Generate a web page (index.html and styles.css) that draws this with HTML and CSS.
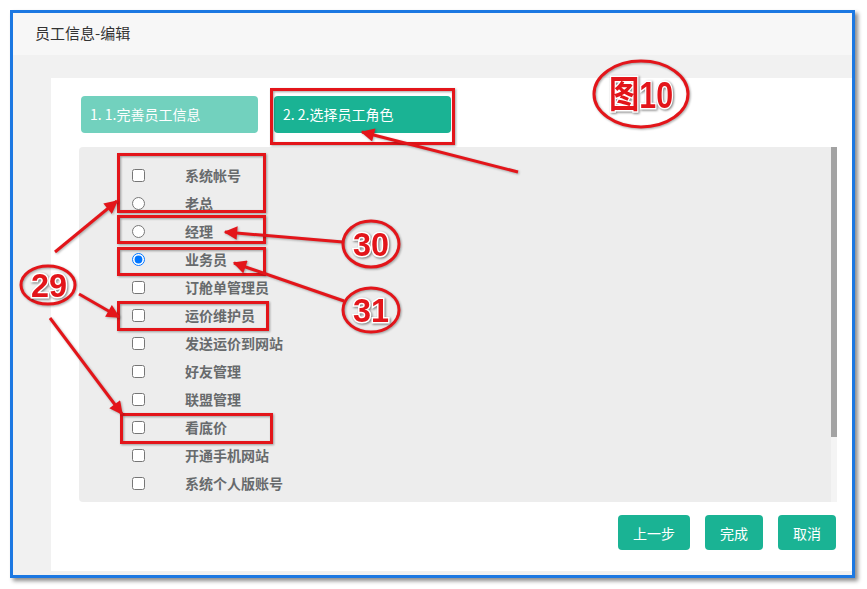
FILE: index.html
```html
<!DOCTYPE html>
<html lang="zh-CN">
<head>
  <meta charset="UTF-8">
  <title>员工信息-编辑</title>
  <link rel="stylesheet" href="styles.css">
</head>
<body>
  <div class="ventana">
    <div class="cabecera">员工信息-编辑</div>
    <div class="fondo">
      <div class="panel">
        <div class="pasos">
          <div class="paso hecho">1. 1.完善员工信息</div>
          <div class="paso actual">2. 2.选择员工角色</div>
        </div>

        <div class="lista">
          <ul class="roles">
            <li><input type="checkbox"><span>系统帐号</span></li>
            <li><input type="radio" name="rol"><span>老总</span></li>
            <li><input type="radio" name="rol"><span>经理</span></li>
            <li><input type="radio" name="rol" checked><span>业务员</span></li>
            <li><input type="checkbox"><span>订舱单管理员</span></li>
            <li><input type="checkbox"><span>运价维护员</span></li>
            <li><input type="checkbox"><span>发送运价到网站</span></li>
            <li><input type="checkbox"><span>好友管理</span></li>
            <li><input type="checkbox"><span>联盟管理</span></li>
            <li><input type="checkbox"><span>看底价</span></li>
            <li><input type="checkbox"><span>开通手机网站</span></li>
            <li><input type="checkbox"><span>系统个人版账号</span></li>
          </ul>
          <div class="barra"><div class="pulgar"></div></div>
        </div>

        <div class="acciones">
          <button type="button">上一步</button>
          <button type="button">完成</button>
          <button type="button">取消</button>
        </div>
      </div>
    </div>
  </div>

  <!-- anotaciones en rojo encima de la captura -->
  <svg class="notas" width="867" height="589" viewBox="0 0 867 589">
    <defs>
      <marker id="punta" viewBox="0 0 10 10" refX="9" refY="5" markerWidth="5" markerHeight="4.5" orient="auto" markerUnits="strokeWidth">
        <path d="M0 0 L10 5 L0 10 Z" fill="#e3151a"/>
      </marker>
    </defs>
    <g class="marcos">
      <rect x="271.5" y="89.5" width="182" height="54"/>
      <rect x="118.5" y="154.5" width="146" height="57"/>
      <rect x="118.5" y="216.5" width="146" height="26"/>
      <rect x="118.5" y="248.5" width="146" height="26"/>
      <rect x="118.5" y="302.5" width="149" height="27"/>
      <rect x="121.5" y="414.5" width="150" height="28"/>
    </g>
    <g class="flechas">
      <line x1="518" y1="172" x2="362" y2="132"/>
      <line x1="55" y1="252" x2="117" y2="201"/>
      <line x1="79" y1="294" x2="119" y2="317"/>
      <line x1="50" y1="318" x2="122" y2="414"/>
      <line x1="343" y1="242" x2="225" y2="232"/>
      <line x1="344" y1="301" x2="234" y2="263"/>
    </g>
    <g class="globos">
      <ellipse cx="641" cy="94" rx="47" ry="33"/>
      <ellipse cx="48" cy="285" rx="27" ry="19"/>
      <ellipse cx="371" cy="244" rx="28" ry="23"/>
      <ellipse cx="371" cy="310" rx="28" ry="22"/>
    </g>
    <g class="cifras">
      <text x="641" y="108" font-size="37" textLength="64" lengthAdjust="spacingAndGlyphs">图10</text>
      <text x="49" y="297" font-size="33" textLength="36" lengthAdjust="spacingAndGlyphs">29</text>
      <text x="371" y="256" font-size="33" textLength="36" lengthAdjust="spacingAndGlyphs">30</text>
      <text x="371" y="322" font-size="33" textLength="36" lengthAdjust="spacingAndGlyphs">31</text>
    </g>
  </svg>
</body>
</html>
```

FILE: styles.css
```css
body {
  margin: 0;
  background: #fff;
  font-family: "Noto Sans CJK SC", "Noto Sans", sans-serif;
  position: relative;
  width: 867px;
  height: 589px;
  overflow: hidden;
}

.ventana {
  margin: 10px 0 0 10px;
  width: 845px;
  height: 568px;
  box-sizing: border-box;
  border: 3px solid #1c78e2;
  box-shadow: 3px 3px 4px rgba(0, 0, 0, 0.45);
  display: flex;
  flex-direction: column;
}

.cabecera {
  height: 42px;
  line-height: 40px;
  padding-left: 22px;
  background: #f7f7f7;
  color: #333;
  font-size: 15px;
}

.fondo {
  flex: 1;
  background: #f1f1f1;
  padding: 23px 0 4px 38px;
  display: flex;
}

.panel {
  flex: 1;
  background: #fff;
  padding: 18px 15px 0 28px;
}

.pasos {
  display: flex;
  gap: 16px;
  margin-left: 2px;
}

.paso {
  width: 177px;
  height: 37px;
  line-height: 36px;
  padding-left: 9px;
  box-sizing: border-box;
  border-radius: 4px;
  color: #fff;
  font-size: 14px;
}

.hecho {
  background: #72d1be;
}

.actual {
  background: #1ab394;
}

.lista {
  display: flex;
  height: 355px;
  margin-top: 14px;
}

.roles {
  flex: 1;
  list-style: none;
  margin: 0;
  padding: 14px 0 0;
  background: #ededed;
  border-radius: 4px 0 0 4px;
}

.barra {
  width: 6px;
  background: #f4f4f4;
}

.pulgar {
  height: 290px;
  background: #a3a3a3;
}

.roles li {
  height: 28px;
  display: flex;
  align-items: center;
  padding-left: 53px;
}

.roles input {
  margin: 0;
  width: 13px;
  height: 13px;
}

.roles span {
  margin-left: 40px;
  color: #676a6c;
  font-size: 14px;
  font-weight: 700;
}

.acciones {
  display: flex;
  justify-content: flex-end;
  gap: 15px;
  margin-top: 13px;
  padding-right: 1px;
}

.acciones button {
  height: 35px;
  padding: 0 15px;
  border: none;
  border-radius: 4px;
  background: #1ab394;
  color: #fff;
  font-family: inherit;
  font-size: 14px;
}

.notas {
  position: absolute;
  left: 0;
  top: 0;
  pointer-events: none;
}

.marcos rect {
  fill: none;
  stroke: #e3151a;
  stroke-width: 3;
  filter: drop-shadow(1px 1px 1px rgba(0, 0, 0, 0.35));
}

.flechas line {
  stroke: #e3151a;
  stroke-width: 3;
  marker-end: url(#punta);
  filter: drop-shadow(1px 1px 1px rgba(0, 0, 0, 0.3));
}

.globos ellipse {
  fill: none;
  stroke: #e3151a;
  stroke-width: 3;
  filter: drop-shadow(1px 1px 1px rgba(0, 0, 0, 0.35));
}

.cifras text {
  fill: #e3151a;
  stroke: #fff;
  stroke-width: 3;
  paint-order: stroke;
  text-anchor: middle;
  font-family: "Liberation Sans", "Noto Sans CJK SC", sans-serif;
  font-weight: 700;
  filter: drop-shadow(1px 1px 1px rgba(0, 0, 0, 0.5));
}
```
